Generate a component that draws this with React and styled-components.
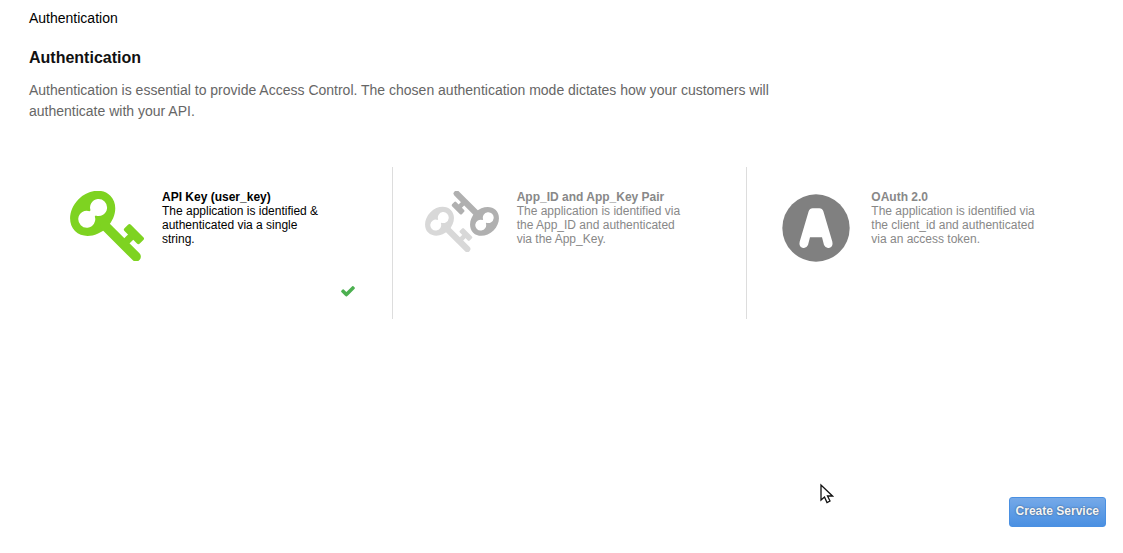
import React, { useState } from "react";
import styled, { createGlobalStyle } from "styled-components";

const GlobalStyle = createGlobalStyle`
  *, *::before, *::after { box-sizing: border-box; }
  body {
    margin: 0;
    background: #fff;
    color: #111;
    font-family: "Liberation Sans", Arial, Helvetica, sans-serif;
    font-size: 14px;
  }
`;

const Page = styled.form`
  display: flex;
  flex-direction: column;
  min-height: 100vh;
  padding: 8px 17px 26px 29px;
`;

const Label = styled.div`
  line-height: 20px;
  color: #000;
`;

const Title = styled.h1`
  margin: 20px 0 0;
  font-size: 16px;
  line-height: 20px;
`;

const Intro = styled.p`
  max-width: 760px;
  margin: 12px 0 0;
  line-height: 21px;
  color: #666;
`;

const Modes = styled.fieldset`
  display: grid;
  grid-template-columns: repeat(3, 1fr);
  min-width: 0;
  margin: 45px 4px 0 9px;
  padding: 0;
  border: 0;
`;

const Mode = styled.label`
  position: relative;
  display: flex;
  gap: 18px;
  min-height: 152px;
  padding: 23px 32px;
  border-right: 1px solid #ddd;
  color: ${(p) => (p.$selected ? "#000" : "#888")};
  font-size: 12px;
  line-height: 14px;
  cursor: pointer;

  &:last-child { border-right: 0; }
`;

const HiddenRadio = styled.input`
  position: absolute;
  opacity: 0;
  margin: 0;
`;

const Icon = styled.svg`
  display: block;
  flex: none;
  width: 74px;
  height: ${(p) => p.$height}px;
  margin-top: 1px;
`;

const ModeText = styled.span`
  max-width: 168px;
`;

const ModeName = styled.strong`
  display: block;
`;

const Tick = styled.svg`
  position: absolute;
  right: 36px;
  bottom: 20px;
  width: 16px;
  height: 16px;
  fill: #4cb050;
`;

const Footer = styled.footer`
  display: flex;
  justify-content: flex-end;
  margin-top: auto;
`;

const SubmitButton = styled.button`
  height: 30px;
  padding: 0 6px 2px;
  border: 1px solid #4a90e2;
  border-radius: 3px;
  background: linear-gradient(#75a9e8, #4a90e2);
  color: #f5f5f5;
  font: bold 12px "Liberation Sans", Arial, sans-serif;
  text-shadow: 0 0 2px rgba(0, 0, 0, 0.5);
  cursor: pointer;
`;

const Pointer = styled.svg`
  position: absolute;
  right: 289px;
  bottom: 48px;
  width: 14px;
  height: 22px;
  pointer-events: none;
`;

function KeyShape({ color }) {
  return (
    <g transform="rotate(45 68 67)">
      <path
        fill={color}
        fillRule="evenodd"
        d="M68 -8C101 -8 128 26 128 67S101 142 68 142S8 108 8 67S35 -8 68 -8Z
           M57 65A25.500 25.500 0 1 1 79 65V69A25.500 25.500 0 1 1 57 69Z"
      />
      <path d="M122 67H252" stroke={color} strokeWidth="29" strokeLinecap="round" />
      <path d="M199 67V24" stroke={color} strokeWidth="22" />
      <rect x="167" y="10" width="65" height="27" rx="6" fill={color} />
    </g>
  );
}

function KeyIcon() {
  return (
    <Icon $height={70} viewBox="0 0 222 210" fill="none" aria-hidden="true">
      <KeyShape color="#7ed321" />
    </Icon>
  );
}

function KeyPairIcon() {
  return (
    <Icon $height={61} viewBox="0 0 222 183" fill="none" aria-hidden="true">
      <g transform="translate(0 48) scale(.64)">
        <KeyShape color="#d8d8d8" />
      </g>
      <g transform="translate(222 134) rotate(180) scale(.64)">
        <KeyShape color="#b0b0b0" />
      </g>
    </Icon>
  );
}

function OAuthIcon() {
  return (
    <Icon $height={74} viewBox="0 0 222 222" aria-hidden="true">
      <circle cx="111" cy="111" r="101" fill="#808080" />
      <path
        fill="#fff"
        d="M101 52H121Q130 52 133 61L160 152Q163 166 152 170Q141 174 135 162L129 139H93L87 162Q81 174 70 170Q59 166 62 152L89 61Q92 52 101 52Z"
      />
    </Icon>
  );
}

const MODES = [
  {
    id: "user_key",
    name: "API Key (user_key)",
    text: "The application is identified & authenticated via a single string.",
    Drawing: KeyIcon,
  },
  {
    id: "app_id",
    name: "App_ID and App_Key Pair",
    text: "The application is identified via the App_ID and authenticated via the App_Key.",
    Drawing: KeyPairIcon,
  },
  {
    id: "oauth",
    name: "OAuth 2.0",
    text: "The application is identified via the client_id and authenticated via an access token.",
    Drawing: OAuthIcon,
  },
];

export default function App() {
  const [mode, setMode] = useState("user_key");
  return (
    <>
      <GlobalStyle />
      <Page onSubmit={(e) => e.preventDefault()}>
        <Label>Authentication</Label>
        <Title>Authentication</Title>
        <Intro>
          Authentication is essential to provide Access Control. The chosen
          authentication mode dictates how your customers will authenticate with
          your API.
        </Intro>
        <Modes>
          {MODES.map(({ id, name, text, Drawing }) => (
            <Mode key={id} $selected={mode === id}>
              <HiddenRadio
                type="radio"
                name="authentication"
                value={id}
                checked={mode === id}
                onChange={() => setMode(id)}
              />
              <Drawing />
              <ModeText>
                <ModeName>{name}</ModeName>
                {text}
              </ModeText>
              {mode === id && (
                <Tick viewBox="0 0 1792 1792" aria-hidden="true">
                  <path d="M1671 566q0 40-28 68l-724 724-136 136q-28 28-68 28t-68-28l-136-136-362-362q-28-28-28-68t28-68l136-136q28-28 68-28t68 28l294 295 656-657q28-28 68-28t68 28l136 136q28 28 28 68z" />
                </Tick>
              )}
            </Mode>
          ))}
        </Modes>
        <Footer>
          <SubmitButton type="submit">Create Service</SubmitButton>
        </Footer>
      </Page>
      <Pointer viewBox="0 0 14 22" aria-hidden="true">
        <path
          d="M1 2V17L4.500 14L7 19.500L10 18L7.500 13H12.500Z"
          fill="#fff"
          stroke="#111"
          strokeWidth="1.300"
        />
      </Pointer>
    </>
  );
}
